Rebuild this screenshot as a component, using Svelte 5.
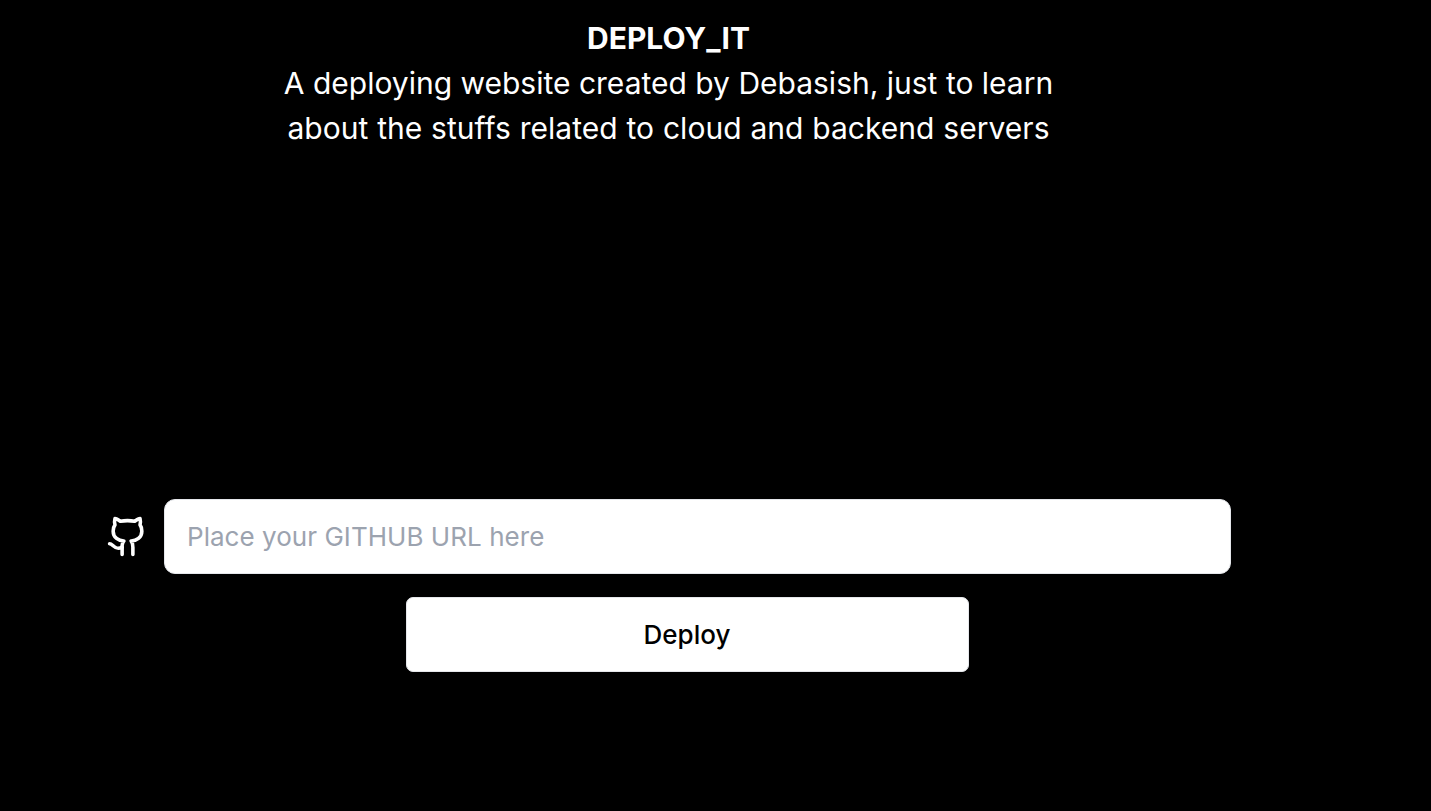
<script>
  let url = $state('');
</script>

<main>
  <header>
    <h1>DEPLOY_IT</h1>
    <p>A deploying website created by Debasish, just to learn<br /><span>about the stuffs related to cloud and backend servers</span></p>
  </header>
  <form onsubmit={(e) => e.preventDefault()}>
    <div class="field">
      <svg viewBox="0 0 24 24" fill="none" stroke="currentColor" stroke-width="2" stroke-linecap="round" stroke-linejoin="round" aria-hidden="true">
        <path d="M15 22v-4a4.8 4.8 0 0 0-1-3.5c3 0 6-2 6-5.5.08-1.25-.27-2.48-1-3.5.28-1.15.28-2.35 0-3.5 0 0-1 0-3 1.5-2.64-.5-5.36-.5-8 0C6 2 5 2 5 2c-.3 1.15-.3 2.35 0 3.5A5.403 5.403 0 0 0 4 9c0 3.5 3 5.5 6 5.5-.39.49-.68 1.05-.85 1.65-.17.6-.22 1.23-.15 1.85v4" />
        <path d="M9 18c-4.51 2-5-2-7-2" />
      </svg>
      <input type="url" placeholder="Place your GITHUB URL here" bind:value={url} />
    </div>
    <button type="submit">Deploy</button>
  </form>
</main>

<style>
  :global(body) {
    margin: 0;
    background: #000;
  }
  main {
    box-sizing: border-box;
    height: 811px;
    overflow: hidden;
    background: #000;
    color: #fff;
    font-family: Inter, sans-serif;
  }
  header {
    width: 900px;
    margin-left: 218.5px;
    padding-top: 16px;
    text-align: center;
    font-size: 30px;
    line-height: 45px;
  }
  h1, p {
    margin: 0;
    font-size: inherit;
  }
  h1 {
    font-weight: 700;
  }
  span {
    letter-spacing: 0.04px;
    word-spacing: 0.3px;
  }
  form {
    display: flex;
    flex-direction: column;
    width: 1125.5px;
    margin: 348px 0 0 105.5px;
  }
  .field {
    display: flex;
    align-items: center;
    gap: 15.5px;
  }
  svg {
    width: 43px;
    height: 43px;
    flex: none;
  }
  input {
    box-sizing: border-box;
    flex: 1;
    min-width: 0;
    height: 75px;
    padding: 0 22px;
    border: 1px solid #e5e7eb;
    border-radius: 11px;
    background: #fff;
    color: #000;
    font: 400 26px Inter, sans-serif;
    letter-spacing: 0.04px;
    outline: none;
  }
  input::placeholder {
    color: #9ca3af;
    opacity: 1;
  }
  button {
    box-sizing: border-box;
    width: 563px;
    height: 75px;
    margin: 23px 0 0 300.5px;
    padding: 0 1px 0 0;
    border: 1px solid #e5e7eb;
    border-radius: 7px;
    background: #fff;
    color: #000;
    font: 500 26px Inter, sans-serif;
  }
</style>
